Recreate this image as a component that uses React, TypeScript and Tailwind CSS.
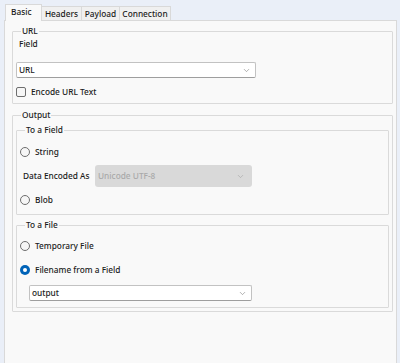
import { ChevronDown } from "lucide-react";

const font = { fontFamily: '"Noto Sans", "Open Sans", sans-serif' };

function Select({ value, width, disabled }: { value: string; width: string; disabled?: boolean }) {
  if (disabled) {
    return (
      <div className={`flex h-[22px] ${width} items-center justify-between rounded-[3px] bg-[#d9d9d9] pl-[3px] pr-[7px] text-[#a9a9a9]`}>
        <span>{value}</span>
        <ChevronDown className="h-[9px] w-[9px] text-[#a3a3a3]" strokeWidth={1.6} />
      </div>
    );
  }
  return (
    <div className={`flex h-[16px] ${width} items-center justify-between rounded-[2px] border border-[#c2c2c2] border-b-[#9e9e9e] bg-white pl-[2px] pr-[4px]`}>
      <span>{value}</span>
      <ChevronDown className="h-[9px] w-[9px] text-[#808080]" strokeWidth={1.6} />
    </div>
  );
}

function Radio({ label, checked }: { label: string; checked?: boolean }) {
  return (
    <div className="flex h-[12px] items-center gap-[5px]">
      {checked ? (
        <span className="flex h-[10px] w-[10px] items-center justify-center rounded-full bg-[#0063b8]">
          <span className="h-[4px] w-[4px] rounded-full bg-white" />
        </span>
      ) : (
        <span className="h-[10px] w-[10px] rounded-full border border-[#6e6e6e] bg-[#f6f6f6]" />
      )}
      <span>{label}</span>
    </div>
  );
}

function Group({ title, className, children }: { title: string; className?: string; children: React.ReactNode }) {
  return (
    <fieldset className={`rounded-[1px] border border-[#dadada] ${className ?? ""}`}>
      <legend className="ml-[5px] px-[1px] leading-[12px]">{title}</legend>
      {children}
    </fieldset>
  );
}

export default function App() {
  const tabs = [
    { name: "Headers", w: "w-[40px]" },
    { name: "Payload", w: "w-[38px]" },
    { name: "Connection", w: "w-[51px]" },
  ];
  return (
    <div
      style={font}
      className="flex h-[363px] w-[400px] flex-col bg-[#eaeff8] pl-[4px] pr-[3px] text-[8.3px] font-medium leading-[12px] text-[#1b1b1b]"
    >
      <div className="relative z-10 -mb-px flex h-[21px] items-end pl-px">
        <div className="flex h-[17px] w-[37px] items-start border border-b-0 border-[#d9d9d9] bg-[#f9f9f9] pl-[5px] pt-[1px]">
          Basic
        </div>
        {tabs.map((t) => (
          <div
            key={t.name}
            className={`flex h-[14px] ${t.w} items-center justify-center border border-b-0 border-l-0 border-[#d9d9d9] bg-[#f0f0f0] mb-px`}
          >
            {t.name}
          </div>
        ))}
      </div>

      <div className="flex-1 border border-b-0 border-[#d9d9d9] bg-[#f9f9f9] pl-[7px] pr-[3px] pt-[4px]">
        <Group title="URL" className="pb-[5px] pl-[3px]">
          <div className="ml-[3px] mt-[1px]">Field</div>
          <div className="mt-[12px]">
            <Select value="URL" width="w-[240px]" />
          </div>
          <div className="mt-[8px] flex h-[12px] items-center gap-[5px]">
            <span className="h-[10px] w-[10px] rounded-[2px] border border-[#6e6e6e] bg-[#f6f6f6]" />
            <span>Encode URL Text</span>
          </div>
        </Group>

        <Group title="Output" className="mt-[5px] pb-[3px] pl-[3px] pr-[3px]">
          <Group title="To a Field" className="mt-[3px] pb-[8px] pl-[3px]">
            <div className="mt-[10px]">
              <Radio label="String" />
            </div>
            <div className="mt-[7px] flex items-center">
              <span className="ml-[3px] w-[72px]">Data Encoded As</span>
              <Select value="Unicode UTF-8" width="w-[157px]" disabled />
            </div>
            <div className="mt-[7px]">
              <Radio label="Blob" />
            </div>
          </Group>

          <Group title="To a File" className="mt-[4px] pb-[6px] pl-[3px]">
            <div className="mt-[9px]">
              <Radio label="Temporary File" />
            </div>
            <div className="mt-[12px]">
              <Radio label="Filename from a Field" checked />
            </div>
            <div className="ml-[9px] mt-[9px]">
              <Select value="output" width="w-[223px]" />
            </div>
          </Group>
        </Group>
      </div>
    </div>
  );
}
